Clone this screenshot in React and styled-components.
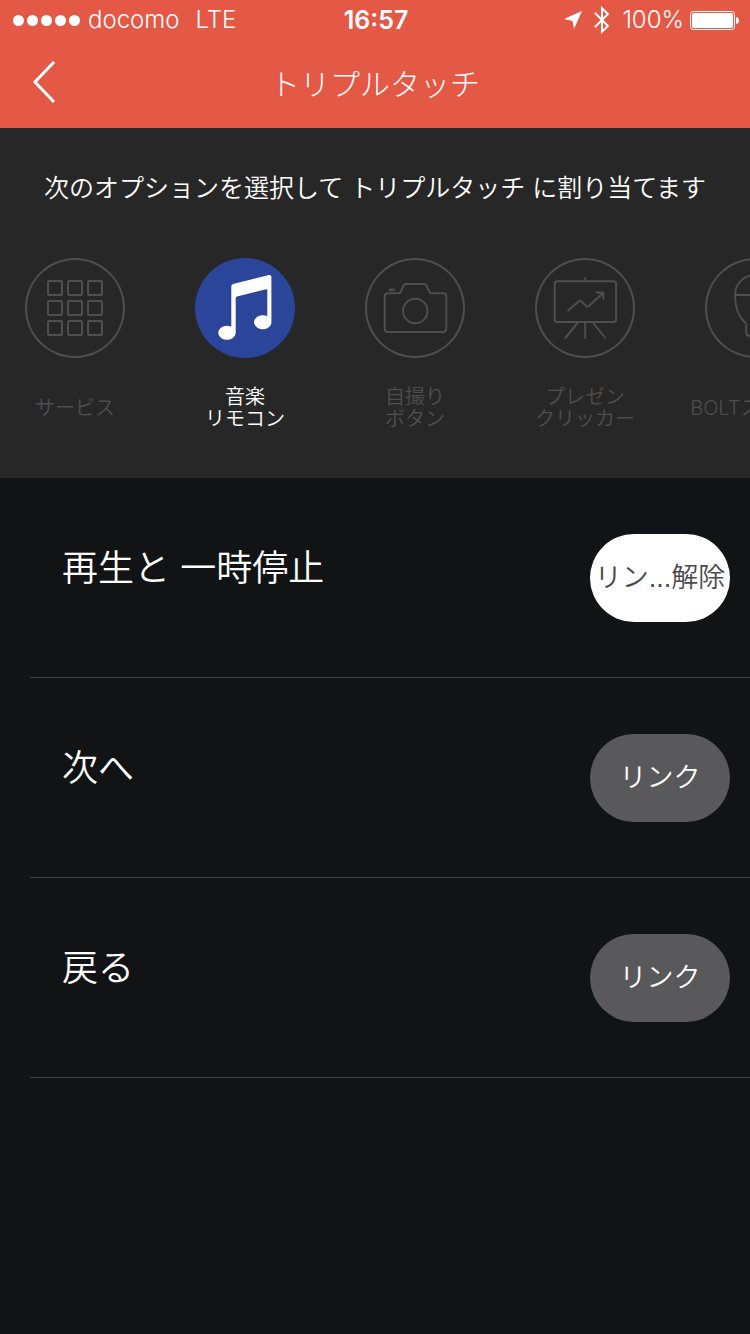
import React, { useState } from "react";
import styled, { createGlobalStyle } from "styled-components";

const OPTIONS = [
  { id: "service", label: ["サービス"] },
  { id: "music", label: ["音楽", "リモコン"] },
  { id: "selfie", label: ["自撮り", "ボタン"] },
  { id: "slides", label: ["プレゼン", "クリッカー"] },
  { id: "bolt", label: ["BOLTスマート"] },
];

const ACTIONS = [
  { id: "play", label: "再生と 一時停止" },
  { id: "next", label: "次へ" },
  { id: "back", label: "戻る" },
];

const OptionIcon = ({ id }) => {
  if (id === "music") {
    return (
      <svg viewBox="0 0 100 100" fill="currentColor" aria-hidden="true">
        <path d="M36.3 28.5Q36.3 26.6 38.2 26L74 17Q76.4 16.5 76.4 19V65A8.7 7 0 1 1 72.3 58.3V32.3Q72.3 31 71 31.3L42 38.6Q40.7 39 40.7 40.4V75A8.7 7 0 1 1 36.3 68.7Z" />
      </svg>
    );
  }
  return (
    <svg
      viewBox="0 0 100 100"
      fill="none"
      stroke="currentColor"
      strokeWidth="2"
      aria-hidden="true"
    >
      {id === "service" &&
        [23, 43, 63].map((y) =>
          [23, 43, 63].map((x) => (
            <rect key={`${x}-${y}`} x={x} y={y} width="14" height="14" rx="1" />
          ))
        )}
      {id === "selfie" && (
        <>
          <path d="M23 35.3H33.4Q35 35.3 35.6 34L38.6 27.5Q39.3 26 41 26H59Q60.7 26 61.4 27.5L64.4 34Q65 35.3 66.6 35.3H78Q81.3 35.3 81.3 38.6V70.5Q81.3 74 78 74H23Q19.7 74 19.7 70.5V38.6Q19.7 35.3 23 35.3Z" />
          <circle cx="50.3" cy="53" r="12.2" />
          <path d="M23.7 31.8H30" strokeWidth="2.5" />
        </>
      )}
      {id === "slides" && (
        <>
          <rect x="19.7" y="23.3" width="61.4" height="40.6" rx="2.5" />
          <path d="M50.2 19V23M43.3 64L30 80.5M50.2 64V81M57.5 64L70.7 80.5" />
          <path d="M32.5 53L43.6 43.4Q45 42.2 46.3 43.4L51.5 48.2Q52.7 49.2 53.9 48.1L68 35" />
          <path d="M61 34.5H68.3V41.5" />
        </>
      )}
      {id === "bolt" && (
        <path d="M30 37A20 20 0 0 1 70 37C70 49 66 59 60 64.5Q59 65.3 59 67V74.5Q59 77.5 55.5 78L50 79L44.5 78Q41.3 77.5 41.3 74.5V67Q41.3 65.3 40 64.5C34 59 30 49 30 37ZM30 37H70" />
      )}
    </svg>
  );
};

const App = () => {
  const [selected, setSelected] = useState("music");
  const [linked, setLinked] = useState("play");

  return (
    <>
      <GlobalStyle />
      <Screen>
        <Header>
          <StatusBar>
            <StatusGroup>
              <Signal>
                <i />
                <i />
                <i />
                <i />
                <i />
              </Signal>
              <span>docomo</span>
              <Network>LTE</Network>
            </StatusGroup>
            <Clock>16:57</Clock>
            <StatusGroup $end>
              <svg width="18" height="18" viewBox="0 0 18 18" aria-hidden="true">
                <path d="M18 0L10 18L8.6 10L0 8Z" fill="currentColor" />
              </svg>
              <Bluetooth viewBox="0 0 16 28" aria-hidden="true">
                <path d="M1 7L14 20L8 25.6V2.4L14 8L1 21" />
              </Bluetooth>
              <span>100%</span>
              <Battery viewBox="0 0 49 19" aria-hidden="true">
                <rect x="0.5" y="0.5" width="44" height="18" rx="3" fill="none" stroke="currentColor" />
                <rect x="2" y="2" width="41" height="15" rx="2" fill="currentColor" />
                <path d="M46 6Q49 6.5 49 9.5T46 13Z" fill="currentColor" />
              </Battery>
            </StatusGroup>
          </StatusBar>
          <NavBar>
            <BackButton type="button" aria-label="戻る">
              <svg width="24" height="44" viewBox="0 0 24 44" aria-hidden="true">
                <path d="M22 2L3 22L22 42" fill="none" stroke="currentColor" strokeWidth="3" />
              </svg>
            </BackButton>
            <Title>トリプルタッチ</Title>
          </NavBar>
        </Header>

        <Panel>
          <Lead>次のオプションを選択して トリプルタッチ に割り当てます</Lead>
          <OptionList>
            {OPTIONS.map((option) => (
              <li key={option.id}>
                <OptionButton
                  type="button"
                  $active={option.id === selected}
                  aria-pressed={option.id === selected}
                  onClick={() => setSelected(option.id)}
                >
                  <OptionCircle $active={option.id === selected}>
                    <OptionIcon id={option.id} />
                  </OptionCircle>
                  <OptionLabel>
                    {option.label.map((line) => (
                      <span key={line}>{line}</span>
                    ))}
                  </OptionLabel>
                </OptionButton>
              </li>
            ))}
          </OptionList>
        </Panel>

        <ActionList>
          {ACTIONS.map((action) => {
            const isLinked = action.id === linked;
            return (
              <ActionRow key={action.id}>
                <ActionName>{action.label}</ActionName>
                <LinkButton
                  type="button"
                  $linked={isLinked}
                  onClick={() => setLinked(isLinked ? null : action.id)}
                >
                  {isLinked ? "リン...解除" : "リンク"}
                </LinkButton>
              </ActionRow>
            );
          })}
        </ActionList>
      </Screen>
    </>
  );
};

const GlobalStyle = createGlobalStyle`
  * {
    box-sizing: border-box;
  }
  body {
    margin: 0;
    background: #121315;
    font-family: Inter, "Noto Sans CJK JP", sans-serif;
    font-weight: 350;
  }
  button {
    padding: 0;
    border: 0;
    background: none;
    color: inherit;
    font: inherit;
    cursor: pointer;
  }
  ul {
    margin: 0;
    padding: 0;
    list-style: none;
  }
`;

const Screen = styled.div`
  min-height: 100vh;
  overflow: hidden;
  background: #121315;
  color: #fff;
`;

const Header = styled.header`
  background: #e35946;
`;

const StatusBar = styled.div`
  display: grid;
  grid-template-columns: 1fr auto 1fr;
  align-items: center;
  height: 40px;
  padding: 0 11px 0 13px;
  font-size: 24px;
  line-height: 40px;
`;

const StatusGroup = styled.div`
  display: flex;
  align-items: center;
  justify-content: ${(props) => (props.$end ? "flex-end" : "flex-start")};
  gap: ${(props) => (props.$end ? "12px" : "8px")};
`;

const Signal = styled.span`
  display: flex;
  gap: 3px;
  i {
    width: 11px;
    height: 11px;
    border-radius: 50%;
    background: #fff;
  }
`;

const Network = styled.span`
  margin-left: 8px;
`;

const Clock = styled.time`
  font-size: 25px;
  font-weight: 600;
`;

const Bluetooth = styled.svg`
  width: 16px;
  height: 28px;
  fill: none;
  stroke: currentColor;
  stroke-width: 2;
`;

const Battery = styled.svg`
  width: 49px;
  height: 19px;
  margin-left: -6px;
`;

const NavBar = styled.div`
  display: grid;
  grid-template-columns: 88px 1fr 88px;
  align-items: center;
  height: 88px;
`;

const BackButton = styled.button`
  display: flex;
  align-items: center;
  height: 84px;
  padding-left: 32px;
  padding-bottom: 4px;
`;

const Title = styled.h1`
  margin: 0;
  font-size: 30px;
  font-weight: 300;
  line-height: 44px;
  text-align: center;
`;

const Panel = styled.section`
  height: 350px;
  padding-top: 40px;
  background: #272727;
`;

const Lead = styled.p`
  margin: 0 0 50px;
  font-size: 25px;
  line-height: 40px;
  text-align: center;
  white-space: nowrap;
`;

const OptionList = styled.ul`
  display: grid;
  grid-auto-flow: column;
  grid-auto-columns: 150px;
  gap: 20px;
  overflow: hidden;
`;

const OptionButton = styled.button`
  display: flex;
  flex-direction: column;
  align-items: center;
  width: 100%;
  color: ${(props) => (props.$active ? "#fff" : "#4e4e4e")};
`;

const OptionCircle = styled.span`
  width: 100px;
  height: 100px;
  border-radius: 50%;
  background: ${(props) => (props.$active ? "#2b459b" : "transparent")};
  box-shadow: ${(props) => (props.$active ? "none" : "inset 0 0 0 2px #4e4e4e")};
  svg {
    display: block;
    width: 100%;
    height: 100%;
  }
`;

const OptionLabel = styled.span`
  display: flex;
  flex-direction: column;
  justify-content: center;
  height: 44px;
  margin-top: 28px;
  font-size: 20px;
  line-height: 22px;
  white-space: nowrap;
`;

const ActionList = styled.ul`
  padding-left: 30px;
`;

const ActionRow = styled.li`
  display: flex;
  align-items: center;
  justify-content: space-between;
  height: 200px;
  padding: 0 20px 0 32px;
  border-bottom: 1px solid #414244;
`;

const ActionName = styled.span`
  padding-bottom: 20px;
  font-size: 36px;
  line-height: 52px;
`;

const LinkButton = styled.button`
  flex: none;
  width: 140px;
  height: 88px;
  border-radius: 44px;
  background: ${(props) => (props.$linked ? "#fff" : "#59595b")};
  color: ${(props) => (props.$linked ? "#4a4a4a" : "#fff")};
  font-family: "Liberation Sans", "Noto Sans CJK JP", sans-serif;
  font-size: 27px;
  line-height: 40px;
  white-space: nowrap;
`;

export default App;
